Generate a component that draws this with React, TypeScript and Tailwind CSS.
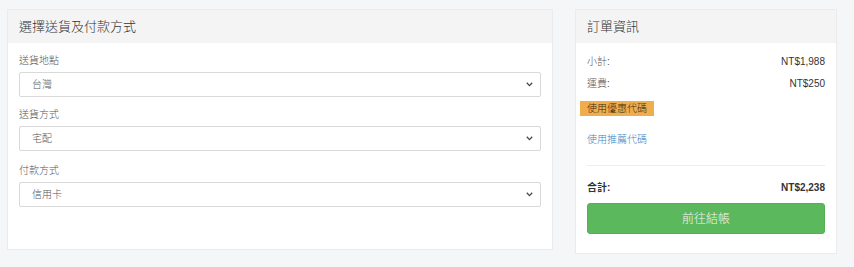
import React from "react";

const font = "font-['Liberation_Sans','Noto_Sans_CJK_TC',sans-serif]";

// one form group: label + select with a drawn chevron
const Field: React.FC<{ label: string; value: string; className?: string }> = ({ label, value, className }) => (
  <div className={className}>
    <div className="h-[14px] leading-[14px] text-[10px] text-[#555] mb-[4px]">{label}</div>
    <div className="relative h-[25px]">
      <select
        defaultValue={value}
        className="appearance-none block w-full h-[25px] border border-[#d9d9d9] rounded-[2px] bg-white pl-[12px] text-[10px] text-[#555] font-light outline-none"
      >
        <option>{value}</option>
      </select>
      <svg className="absolute right-[8px] top-[10px] pointer-events-none" width="7" height="5" viewBox="0 0 7 5">
        <path d="M0.8 0.8 L3.5 3.6 L6.2 0.8" fill="none" stroke="#444" strokeWidth="1.3" />
      </svg>
    </div>
  </div>
);

const App: React.FC = () => {
  return (
    <div className={`w-[854px] h-[267px] bg-[#f5f6f8] pl-[7px] pt-[9px] flex items-start gap-[22px] text-[#333] font-light ${font}`}>
      {/* Left: shipping & payment */}
      <div className="w-[546px] bg-white border border-[#ebebeb]">
        <div className="h-[33px] bg-[#f4f4f4] px-[11px] flex items-center text-[13px] text-[#333]">
          選擇送貨及付款方式
        </div>
        <div className="px-[11px] pt-[11px] pb-[42px]">
          <Field label="送貨地點" value="台灣" />
          <Field label="送貨方式" value="宅配" className="mt-[11px]" />
          <Field label="付款方式" value="信用卡" className="mt-[13px]" />
        </div>
      </div>

      {/* Right: order summary */}
      <div className="w-[262px] bg-white border border-[#ebebeb]">
        <div className="h-[33px] bg-[#f4f4f4] px-[11px] flex items-center text-[13px] text-[#333]">
          訂單資訊
        </div>
        <div className="px-[11px] pt-[12px] pb-[19px] text-[10px]">
          <div className="flex justify-between h-[14px] leading-[14px]">
            <span className="text-[#555]">小計:</span>
            <span>NT$1,988</span>
          </div>
          <div className="flex justify-between h-[14px] leading-[14px] mt-[8px]">
            <span className="text-[#555]">運費:</span>
            <span>NT$250</span>
          </div>
          <div className="mt-[10px] -ml-[7px] inline-flex items-center h-[15px] px-[7px] bg-[#f0ad4e] text-[#3a2a10]">
            使用優惠代碼
          </div>
          <div className="mt-[17px] h-[14px] leading-[14px] text-[#3d7fc1]">使用推薦代碼</div>
          <div className="mt-[18px] border-t border-[#eeeeee]" />
          <div className="flex justify-between h-[14px] leading-[14px] mt-[15px] font-bold">
            <span>合計:</span>
            <span>NT$2,238</span>
          </div>
          <button className="block mt-[8px] w-full h-[31px] rounded-[3px] bg-[#5cb85c] border border-[#53b153] text-[12px] text-[#f4f4f4]">
            前往結帳
          </button>
        </div>
      </div>
    </div>
  );
};

export default App;
